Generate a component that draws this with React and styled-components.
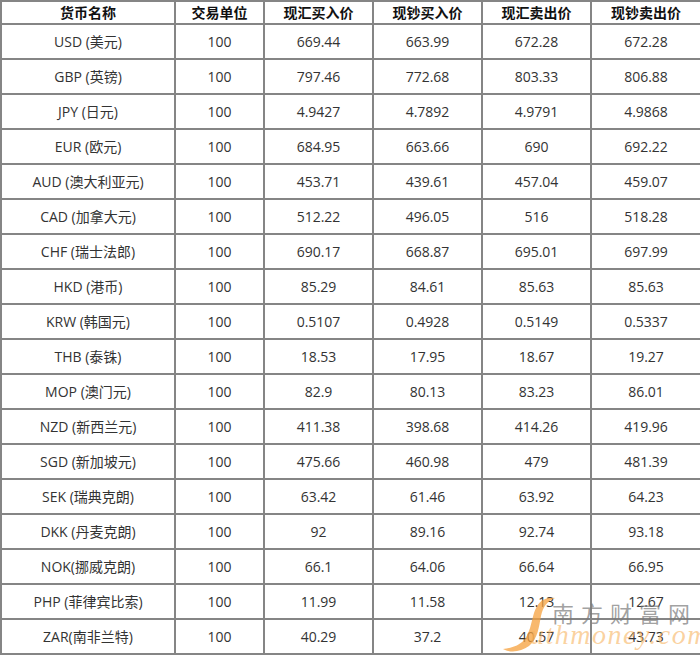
import React from 'react';
import styled, { createGlobalStyle } from 'styled-components';

const rows = [
  ['USD (美元)', '669.44', '663.99', '672.28', '672.28'],
  ['GBP (英镑)', '797.46', '772.68', '803.33', '806.88'],
  ['JPY (日元)', '4.9427', '4.7892', '4.9791', '4.9868'],
  ['EUR (欧元)', '684.95', '663.66', '690', '692.22'],
  ['AUD (澳大利亚元)', '453.71', '439.61', '457.04', '459.07'],
  ['CAD (加拿大元)', '512.22', '496.05', '516', '518.28'],
  ['CHF (瑞士法郎)', '690.17', '668.87', '695.01', '697.99'],
  ['HKD (港币)', '85.29', '84.61', '85.63', '85.63'],
  ['KRW (韩国元)', '0.5107', '0.4928', '0.5149', '0.5337'],
  ['THB (泰铢)', '18.53', '17.95', '18.67', '19.27'],
  ['MOP (澳门元)', '82.9', '80.13', '83.23', '86.01'],
  ['NZD (新西兰元)', '411.38', '398.68', '414.26', '419.96'],
  ['SGD (新加坡元)', '475.66', '460.98', '479', '481.39'],
  ['SEK (瑞典克朗)', '63.42', '61.46', '63.92', '64.23'],
  ['DKK (丹麦克朗)', '92', '89.16', '92.74', '93.18'],
  ['NOK(挪威克朗)', '66.1', '64.06', '66.64', '66.95'],
  ['PHP (菲律宾比索)', '11.99', '11.58', '12.13', '12.67'],
  ['ZAR(南非兰特)', '40.29', '37.2', '40.57', '43.73'],
];

const headers = ['货币名称', '交易单位', '现汇买入价', '现钞买入价', '现汇卖出价', '现钞卖出价'];
const widths = [174, 89, 109, 109, 109, 110];

const GlobalStyle = createGlobalStyle`
  body {
    margin: 0;
    background: #fff;
    font-family: "Open Sans", "Noto Sans CJK SC", sans-serif;
  }
`;

const Wrapper = styled.div`
  position: relative;
  width: 700px;
  height: 655px;
  overflow: hidden;
`;

const Table = styled.table`
  border-collapse: collapse;
  table-layout: fixed;
  width: 700px;
  border: 2px solid #858585;
`;

const HeadCell = styled.th`
  height: 21px;
  padding: 0;
  border: 2px solid #858585;
  font-size: 14px;
  font-weight: bold;
  color: #111;
  text-align: center;
  line-height: 20px;
`;

const Cell = styled.td`
  height: 33px;
  padding: 0;
  border: 2px solid #858585;
  font-size: 14px;
  color: #333;
  text-align: center;
  line-height: 20px;
`;

const Watermark = styled.div`
  position: absolute;
  left: 500px;
  top: 594px;
  width: 200px;
  height: 61px;
  pointer-events: none;
`;

const Brand = styled.div`
  position: absolute;
  left: 52px;
  top: 6px;
  font-family: "Noto Sans CJK SC", sans-serif;
  font-size: 22px;
  letter-spacing: 7px;
  color: rgba(120, 120, 120, 0.7);
  white-space: nowrap;
  line-height: 24px;
`;

const Domain = styled.div`
  position: absolute;
  left: 30px;
  top: 26px;
  font-family: "Liberation Serif", serif;
  font-style: italic;
  font-size: 28px;
  letter-spacing: 1.5px;
  color: rgba(247, 180, 95, 0.6);
  white-space: nowrap;
  line-height: 30px;
`;

const Swoosh = styled.svg`
  position: absolute;
  left: 0;
  top: 1px;
`;

export default function App() {
  return (
    <Wrapper>
      <GlobalStyle />
      <Table>
        <colgroup>
          {widths.map((w, i) => <col key={i} style={{ width: w }} />)}
        </colgroup>
        <thead>
          <tr>
            {headers.map(h => <HeadCell key={h}>{h}</HeadCell>)}
          </tr>
        </thead>
        <tbody>
          {rows.map(r => (
            <tr key={r[0]}>
              <Cell>{r[0]}</Cell>
              <Cell>100</Cell>
              <Cell>{r[1]}</Cell>
              <Cell>{r[2]}</Cell>
              <Cell>{r[3]}</Cell>
              <Cell>{r[4]}</Cell>
            </tr>
          ))}
        </tbody>
      </Table>
      <Watermark>
        <Swoosh width="60" height="58" viewBox="0 0 60 58">
          <path
            d="M55 3 C44 1 37 8 34 18 C31 28 30 38 24 45 C19 51 11 53 3 54 C10 58 21 57 29 51 C38 44 39 31 41 21 C43 12 47 6 55 3 Z"
            fill="rgba(245, 160, 60, 0.75)"
          />
        </Swoosh>
        <Brand>南方财富网</Brand>
        <Domain>uthmoney.com</Domain>
      </Watermark>
    </Wrapper>
  );
}
